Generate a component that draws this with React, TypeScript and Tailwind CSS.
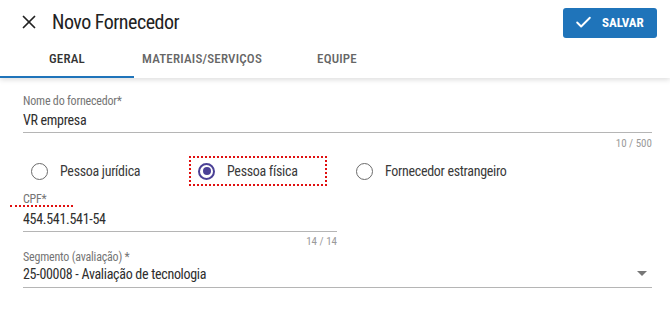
import { Check, X } from 'lucide-react';

const TABS = ['Geral', 'Materiais/Serviços', 'Equipe'];

interface RadioOptionProps {
  label: string;
  checked?: boolean;
  className?: string;
}

function RadioOption({ label, checked, className }: RadioOptionProps) {
  return (
    <div
      className={`flex h-[30px] items-center gap-[12px] px-[7px] ${
        checked ? 'border-2 border-dotted border-[#e01010]' : 'border-2 border-transparent'
      } ${className ?? ''}`}
    >
      {checked ? (
        <span className="flex h-[17px] w-[17px] items-center justify-center rounded-full border-2 border-[#4b4196]">
          <span className="h-[8px] w-[8px] rounded-full bg-[#4b4196]" />
        </span>
      ) : (
        <span className="h-[17px] w-[17px] rounded-full border-[1.5px] border-[#6b6b6b]" />
      )}
      <span className="text-[14px] tracking-[-0.3px] text-[#3a3a3a]">{label}</span>
    </div>
  );
}

export default function App() {
  return (
    <div className="h-[326px] w-[670px] bg-white font-['Roboto',sans-serif] font-stretch-[85%]">
      {/* Header */}
      <div className="relative z-10 bg-white shadow-[0_2px_5px_rgba(0,0,0,0.13)]">
        <div className="flex h-[44px] items-center pl-[18px] pr-[13px]">
          <X size={22} strokeWidth={1.9} className="text-[#222]" />
          <h1 className="ml-[12px] text-[20px] tracking-[-0.5px] text-[#222]">Novo Fornecedor</h1>
          <button className="ml-auto mt-[1px] flex h-[30px] w-[94px] items-center gap-[9px] rounded-[3px] bg-[#1f74ba] pl-[11px] text-[13px] font-bold text-white">
            <Check size={19} strokeWidth={2.4} />
            SALVAR
          </button>
        </div>

        {/* Tabs */}
        <div className="flex h-[34px]">
          {TABS.map((tab, i) => (
            <div
              key={tab}
              className={`flex w-[134px] items-center justify-center border-b-2 pb-[3px] text-[13px] font-medium uppercase tracking-[0.2px] ${
                i === 0 ? 'border-[#1f74ba] text-[#333]' : 'border-transparent text-[#666]'
              } ${i > 0 ? 'ml-[1px]' : ''}`}
            >
              {tab}
            </div>
          ))}
        </div>
      </div>

      {/* Form */}
      <div className="pl-[23px] pr-[18px] pt-[15px]">
        {/* Nome do fornecedor */}
        <div className="border-b border-[#b5b5b5] pb-[2px]">
          <div className="text-[12px] leading-[16px] tracking-[-0.2px] text-[#757575]">Nome do fornecedor*</div>
          <div className="mt-[1px] text-[14px] leading-[20px] tracking-[-0.3px] text-[#2e2e2e]">VR empresa</div>
        </div>
        <div className="mt-[4px] text-right text-[11px] leading-[14px] text-[#9a9a9a]">10 / 500</div>

        {/* Tipo */}
        <div className="mt-[5px] -ml-[1px] flex gap-[20px]">
          <RadioOption label="Pessoa jurídica" className="w-[147px]" />
          <RadioOption label="Pessoa física" checked className="w-[138px]" />
          <RadioOption label="Fornecedor estrangeiro" />
        </div>

        {/* CPF */}
        <div className="w-[314px]">
          <div className="mt-[5px] border-b border-[#b5b5b5] pb-[2px]">
            <div className="relative text-[12px] leading-[16px] tracking-[-0.2px] text-[#757575]">
              CPF*
              <span className="absolute -left-[13px] top-[14px] w-[63px] border-b-2 border-dotted border-[#e01010]" />
            </div>
            <div className="mt-[2px] text-[14px] leading-[20px] tracking-[-0.3px] text-[#2e2e2e]">454.541.541-54</div>
          </div>
          <div className="mt-[3px] text-right text-[11px] leading-[14px] text-[#9a9a9a]">14 / 14</div>
        </div>

        {/* Segmento */}
        <div className="border-b border-[#b5b5b5] pb-[3px]">
          <div className="text-[12px] leading-[16px] tracking-[-0.2px] text-[#757575]">Segmento (avaliação) *</div>
          <div className="-mt-[1px] flex items-center justify-between">
            <span className="text-[14px] leading-[20px] tracking-[-0.3px] text-[#2e2e2e]">
              25-00008 - Avaliação de tecnologia
            </span>
            <svg width="10" height="5" viewBox="0 0 10 5" className="mr-[5px] mb-[2px] text-[#777]">
              <path d="M0 0h10L5 5z" fill="currentColor" />
            </svg>
          </div>
        </div>
      </div>
    </div>
  );
}
